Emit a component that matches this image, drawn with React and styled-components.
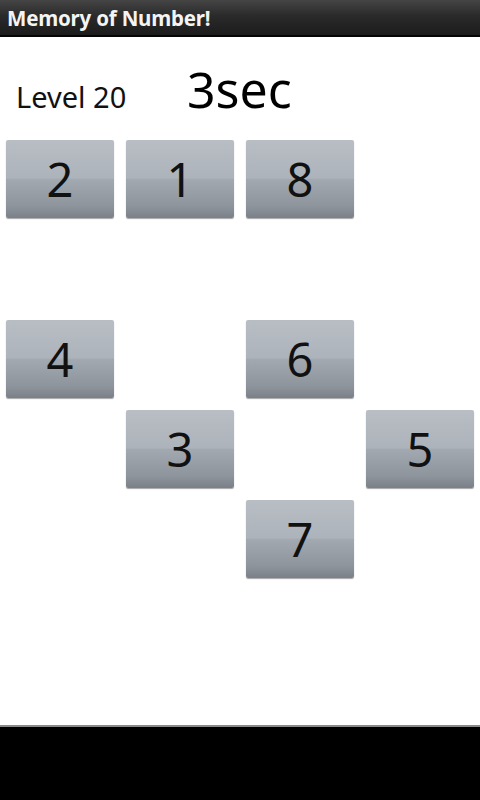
import React from "react";
import styled, { createGlobalStyle } from "styled-components";

const Global = createGlobalStyle`
  html, body { margin: 0; padding: 0; background: #ffffff; }
  body { font-family: "Noto Sans", "Open Sans", sans-serif; }
`;

const Screen = styled.div`
  width: 480px;
  height: 800px;
  display: flex;
  flex-direction: column;
  overflow: hidden;
`;

const TitleBar = styled.div`
  height: 35px;
  flex: none;
  display: flex;
  align-items: center;
  padding-left: 7px;
  background: linear-gradient(#454545, #2a2a2a 45%, #1c1c1c);
  border-bottom: 2px solid #050505;
  color: #f4f4f4;
  font-weight: 700;
  font-size: 20.5px;
  letter-spacing: -0.2px;
`;

const Content = styled.div`
  flex: 1;
  background: #ffffff;
  display: flex;
  flex-direction: column;
`;

const Header = styled.div`
  height: 98px;
  display: flex;
  align-items: center;
`;

const LevelLabel = styled.div`
  width: 187px;
  padding-left: 16px;
  box-sizing: border-box;
  font-size: 29px;
  color: #111;
  margin-top: 20px;
`;

const Timer = styled.div`
  font-size: 50px;
  color: #000;
  margin-top: 6px;
`;

const Board = styled.div`
  display: grid;
  grid-template-columns: repeat(4, 120px);
  grid-template-rows: repeat(5, 90px);
`;

const Tile = styled.div`
  grid-column: ${(p) => p.$col + 1};
  grid-row: ${(p) => p.$row + 1};
  margin: 5px 6px 7px 6px;
  display: flex;
  align-items: center;
  justify-content: center;
  border-radius: 2px;
  background: linear-gradient(
    #b9bec5 0%,
    #adb3ba 49%,
    #a3a9b0 50%,
    #8e949b 85%,
    #7b8088 100%
  );
  box-shadow: 0 1px 1px rgba(0, 0, 0, 0.35);
  font-size: 47px;
  color: #111;
`;

const BottomBar = styled.div`
  height: 73px;
  flex: none;
  background: #000;
  border-top: 2px solid #8a8a8a;
`;

const tiles = [
  { n: 2, col: 0, row: 0 },
  { n: 1, col: 1, row: 0 },
  { n: 8, col: 2, row: 0 },
  { n: 4, col: 0, row: 2 },
  { n: 6, col: 2, row: 2 },
  { n: 3, col: 1, row: 3 },
  { n: 5, col: 3, row: 3 },
  { n: 7, col: 2, row: 4 },
];

export default function App() {
  return (
    <>
      <Global />
      <Screen>
        <TitleBar>Memory of Number!</TitleBar>
        <Content>
          <Header>
            <LevelLabel>Level 20</LevelLabel>
            <Timer>3sec</Timer>
          </Header>
          <Board>
            {tiles.map((t) => (
              <Tile key={t.n} $col={t.col} $row={t.row}>
                {t.n}
              </Tile>
            ))}
          </Board>
        </Content>
        <BottomBar />
      </Screen>
    </>
  );
}
